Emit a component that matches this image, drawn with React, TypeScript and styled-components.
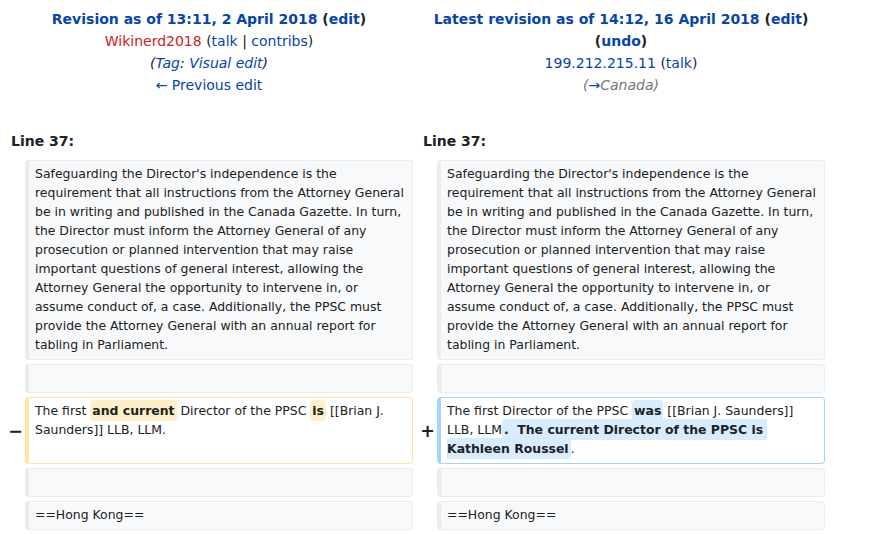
import React from "react";
import styled, { createGlobalStyle } from "styled-components";

const Global = createGlobalStyle`
  html, body { margin: 0; padding: 0; background: #fff; }
  body { font-family: "DejaVu Sans", sans-serif; color: #202122; }
`;

const Page = styled.div`
  padding: 8px 0 0 5px;
  width: 874px;
  box-sizing: border-box;
`;

const HeaderGrid = styled.div`
  display: grid;
  grid-template-columns: 408px 408px;
  column-gap: 4px;
  font-size: 14px;
  line-height: 22px;
`;

const HeaderCell = styled.div`
  display: flex;
  flex-direction: column;
  align-items: center;
  text-align: center;
`;

const Line = styled.div<{ $bold?: boolean; $italic?: boolean }>`
  font-weight: ${(p) => (p.$bold ? "bold" : "normal")};
  font-style: ${(p) => (p.$italic ? "italic" : "normal")};
  white-space: nowrap;
`;

const A = styled.a<{ $tone?: "red" | "blue" | "gray" }>`
  color: ${(p) => (p.$tone === "red" ? "#cc2222" : p.$tone === "gray" ? "#72777d" : "#0645ad")};
  text-decoration: none;
`;

const Muted = styled.span`
  color: #72777d;
`;

const DiffGrid = styled.div`
  display: grid;
  grid-template-columns: 16px 388px 16px 388px;
  column-gap: 4px;
  row-gap: 4px;
  margin-top: 34px;
`;

const LineNo = styled.div`
  grid-column: span 2;
  font-size: 14px;
  font-weight: bold;
  line-height: 22px;
  padding: 0 0 4px 6px;
`;

const Marker = styled.div`
  display: flex;
  align-items: center;
  justify-content: flex-end;
  font-size: 17.5px;
  font-weight: bold;
  margin-right: -2px;
`;

type Kind = "context" | "deleted" | "added";

const borderFor = (k: Kind) => (k === "deleted" ? "#ffe49c" : k === "added" ? "#a3d3ff" : "#eaecf0");

const Cell = styled.div<{ $kind: Kind }>`
  box-sizing: border-box;
  font-size: 12.45px;
  line-height: 19px;
  padding: 3px 5px 5px 6px;
  border: 1px solid ${(p) => borderFor(p.$kind)};
  border-left-width: 4px;
  border-radius: 4px;
  background: ${(p) => (p.$kind === "context" ? "#f8f9fa" : "#ffffff")};
  color: #202122;
  white-space: pre-wrap;
  word-wrap: break-word;
  min-height: 29px;
`;

const Change = styled.span<{ $kind: Kind }>`
  font-weight: bold;
  border-radius: 4px;
  padding: 3px 2px;
  background: ${(p) => (p.$kind === "deleted" ? "#fdefc9" : "#d8ecff")};
`;

const contextText =
  "Safeguarding the Director's independence is the requirement that all instructions from the Attorney General be in writing and published in the Canada Gazette. In turn, the Director must inform the Attorney General of any prosecution or planned intervention that may raise important questions of general interest, allowing the Attorney General the opportunity to intervene in, or assume conduct of, a case. Additionally, the PPSC must provide the Attorney General with an annual report for tabling in Parliament.";

const Empty = () => <div />;

export default function App() {
  return (
    <Page>
      <Global />
      <HeaderGrid>
        <HeaderCell>
          <Line $bold>
            <A href="#">Revision as of 13:11, 2 April 2018</A> (<A href="#">edit</A>)
          </Line>
          <Line>
            <A href="#" $tone="red">Wikinerd2018</A> (<A href="#">talk</A> | <A href="#">contribs</A>)
          </Line>
          <Line $italic>
            (<A href="#">Tag</A>: <A href="#">Visual edit</A>)
          </Line>
          <Line>
            <A href="#">← Previous edit</A>
          </Line>
        </HeaderCell>
        <HeaderCell>
          <Line $bold>
            <A href="#">Latest revision as of 14:12, 16 April 2018</A> (<A href="#">edit</A>)
          </Line>
          <Line $bold>
            (<A href="#">undo</A>)
          </Line>
          <Line>
            <A href="#">199.212.215.11</A> (<A href="#">talk</A>)
          </Line>
          <Line $italic>
            <Muted>
              (<A href="#">→</A>Canada)
            </Muted>
          </Line>
        </HeaderCell>
      </HeaderGrid>

      <DiffGrid>
        <LineNo>Line 37:</LineNo>
        <LineNo>Line 37:</LineNo>

        <Empty />
        <Cell $kind="context">{contextText}</Cell>
        <Empty />
        <Cell $kind="context">{contextText}</Cell>

        <Empty />
        <Cell $kind="context"></Cell>
        <Empty />
        <Cell $kind="context"></Cell>

        <Marker>−</Marker>
        <Cell $kind="deleted">
          The first <Change $kind="deleted">and current</Change> Director of the PPSC{" "}
          <Change $kind="deleted">is</Change> [[Brian J. Saunders]] LLB, LLM.
        </Cell>
        <Marker>+</Marker>
        <Cell $kind="added">
          The first Director of the PPSC <Change $kind="added">was</Change> [[Brian J. Saunders]] LLB, LLM
          <Change $kind="added">{".  The current Director of the PPSC is Kathleen Roussel"}</Change>.
        </Cell>

        <Empty />
        <Cell $kind="context"></Cell>
        <Empty />
        <Cell $kind="context"></Cell>

        <Empty />
        <Cell $kind="context">==Hong Kong==</Cell>
        <Empty />
        <Cell $kind="context">==Hong Kong==</Cell>
      </DiffGrid>
    </Page>
  );
}
